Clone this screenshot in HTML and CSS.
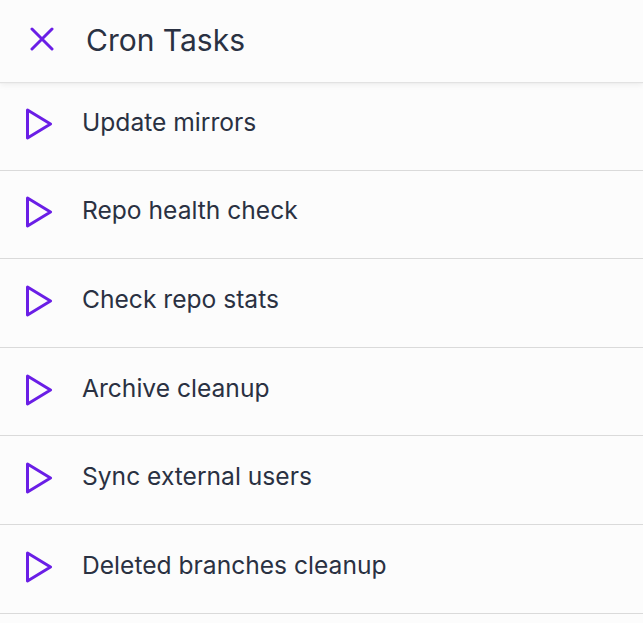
FILE: index.html
```html
<!DOCTYPE html>
<html>
<head>
<meta charset="utf-8">
<link rel="stylesheet" href="styles.css">
</head>
<body>
<div class="app">
  <header class="header">
    <svg class="close" width="24" height="24" viewBox="0 0 24 24"><path d="M2 2 L22 22 M22 2 L2 22" stroke="#6a1ee6" stroke-width="3" stroke-linecap="round" fill="none"/></svg>
    <h1 class="title">Cron Tasks</h1>
  </header>
  <ul class="list">
    <li class="row"><svg class="play" width="28" height="32" viewBox="0 0 28 32"><path d="M2.5 2 L25.5 16 L2.5 30 Z" stroke="#6a1ee6" stroke-width="3" stroke-linejoin="round" fill="none"/></svg><span class="label">Update mirrors</span></li>
    <li class="row"><svg class="play" width="28" height="32" viewBox="0 0 28 32"><path d="M2.5 2 L25.5 16 L2.5 30 Z" stroke="#6a1ee6" stroke-width="3" stroke-linejoin="round" fill="none"/></svg><span class="label">Repo health check</span></li>
    <li class="row"><svg class="play" width="28" height="32" viewBox="0 0 28 32"><path d="M2.5 2 L25.5 16 L2.5 30 Z" stroke="#6a1ee6" stroke-width="3" stroke-linejoin="round" fill="none"/></svg><span class="label">Check repo stats</span></li>
    <li class="row"><svg class="play" width="28" height="32" viewBox="0 0 28 32"><path d="M2.5 2 L25.5 16 L2.5 30 Z" stroke="#6a1ee6" stroke-width="3" stroke-linejoin="round" fill="none"/></svg><span class="label">Archive cleanup</span></li>
    <li class="row"><svg class="play" width="28" height="32" viewBox="0 0 28 32"><path d="M2.5 2 L25.5 16 L2.5 30 Z" stroke="#6a1ee6" stroke-width="3" stroke-linejoin="round" fill="none"/></svg><span class="label">Sync external users</span></li>
    <li class="row"><svg class="play" width="28" height="32" viewBox="0 0 28 32"><path d="M2.5 2 L25.5 16 L2.5 30 Z" stroke="#6a1ee6" stroke-width="3" stroke-linejoin="round" fill="none"/></svg><span class="label">Deleted branches cleanup</span></li>
  </ul>
</div>
</body>
</html>
```
FILE: styles.css
```css
html, body {
  margin: 0;
  padding: 0;
  background: #fcfcfc;
}
body {
  font-family: Inter, "Noto Sans", sans-serif;
  color: #2a3142;
}
.app {
  width: 643px;
  height: 623px;
  overflow: hidden;
  background: #fcfcfc;
}
.header {
  position: relative;
  z-index: 1;
  height: 82px;
  display: flex;
  align-items: center;
  padding-left: 30px;
  padding-bottom: 2px;
  box-sizing: border-box;
  gap: 32px;
  background: #fcfcfc;
  box-shadow: 0 1px 1px #e2e2e2, 0 3px 6px rgba(0, 0, 0, 0.06);
}
.close {
  flex: none;
  margin-top: -2px;
}
.title {
  margin: 0;
  font-size: 30px;
  font-weight: 400;
  color: #2a3142;
}
.list {
  list-style: none;
  margin: 0;
  padding: 0;
}
.row {
  height: 88.6px;
  box-sizing: border-box;
  display: flex;
  align-items: center;
  padding-left: 25px;
  padding-bottom: 8px;
  gap: 29px;
  border-bottom: 1.4px solid #dadada;
}
.play {
  flex: none;
  margin-top: 4px;
}
.label {
  font-size: 24.6px;
  color: #2a3142;
}
```
